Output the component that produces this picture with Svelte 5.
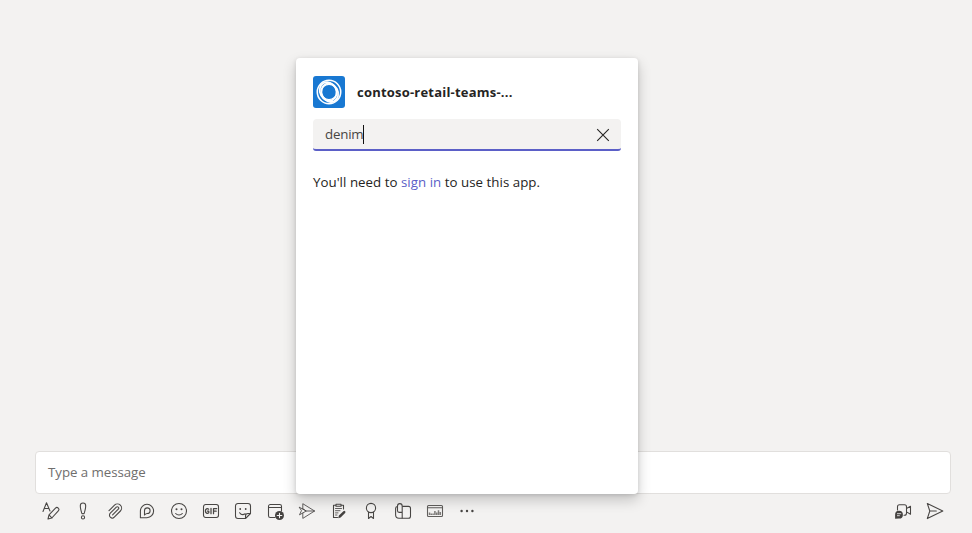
<script>
  let query = $state('denim');
</script>

<main>
  <div class="space"></div>
  <section class="compose">
    <div class="message"><span class="t-msg">Type a message</span></div>
    <div class="toolbar">
      <button aria-label="Format"><svg viewBox="0 0 20 20"><path d="M2 10.5 5.5 1.8 9 10M3.3 7.5h4.5M7 18l1-4.2 6.5-6.7a1.9 1.9 0 0 1 2.8 2.7L10.8 17zM8 13.8 11 17" /></svg></button>
      <button aria-label="Priority"><svg viewBox="0 0 20 20"><path d="M7.3 4.8c0-1.6 1.1-2.8 2.7-2.8s2.7 1.2 2.7 2.8c0 2.7-.8 5.2-1.4 7.2-.4 1.1-2.2 1.1-2.6 0-.6-2-1.4-4.5-1.4-7.2z" /><circle cx="10" cy="16.4" r="1.6" /></svg></button>
      <button aria-label="Attach"><svg viewBox="0 0 20 20"><path d="M4 9.7l5.5-5.5a4.1 4.1 0 0 1 5.9 5.8l-6.1 6.2a2.8 2.8 0 0 1-4-4l6-6a1.4 1.4 0 0 1 2 2l-5.7 5.7" /></svg></button>
      <button aria-label="Loop"><svg viewBox="0 0 20 20"><path d="M3.4 16.7V10A6.6 6.7 0 1 1 10 16.7zM7.5 14V9.7a2.8 2.8 0 1 1 2.8 2.8c-1.2 0-2 .6-2.8 1.5" /></svg></button>
      <button aria-label="Emoji"><svg viewBox="0 0 20 20"><circle cx="10" cy="10" r="7.5" /><path d="M6.7 12.5c1.7 2 4.9 2 6.6 0" /><g class="solid"><circle cx="7.5" cy="8.2" r="1" /><circle cx="12.5" cy="8.2" r="1" /></g></svg></button>
      <button aria-label="GIF"><svg viewBox="0 0 20 20"><rect x="2.5" y="3.5" width="15" height="13" rx="2.2" /><path class="bold" d="M7.6 8.2C6.4 7 4.4 7.9 4.4 10s2 3 3.4 1.8v-1.6H6.4M10 7.3v5.4M12.5 12.7V7.6h3.2M12.5 10.2h2.7" /></svg></button>
      <button aria-label="Sticker"><svg viewBox="0 0 20 20"><path d="M5 2.5h10A2.5 2.5 0 0 1 17.5 5v7.5l-5 5H5A2.5 2.5 0 0 1 2.5 15V5A2.5 2.5 0 0 1 5 2.5zM17.5 12.5H15a2.5 2.5 0 0 0-2.5 2.5v2.5M6.6 11.7c1.3 1.9 3.6 2.3 5.6 1.1" /><g class="solid"><circle cx="7.2" cy="8" r=".9" /><circle cx="12.7" cy="8" r=".9" /></g></svg></button>
      <button aria-label="Meet"><svg viewBox="0 0 20 20"><path d="M10 16.5H5.3a1.8 1.8 0 0 1-1.8-1.8V5.3a1.8 1.8 0 0 1 1.8-1.8h9.4a1.8 1.8 0 0 1 1.8 1.8V10M3.5 6.5h13" /><circle class="fill" cx="14.5" cy="14.5" r="4.5" /><path class="cut" d="M14.5 12.2v4.6M12.2 14.5h4.6" /></svg></button>
      <button aria-label="Stream"><svg viewBox="0 0 20 20"><path class="thin" d="M5.8 7.8V2.7L17.6 10 5.8 17.4v-5.2M2.5 6.3l6.8 3.7-6.8 3.8 1.8-3.8zM5.8 7.8 9.3 10h8.2" /></svg></button>
      <button aria-label="Tasks"><svg viewBox="0 0 20 20"><path d="M7 4.3H4.5v12.2h4M12 4.3h2.5V8M7 3.3h5v2H7z" /><path class="thin" d="M6.5 7.5h6M6.5 9.7h4.5M6.5 11.9h2.5M6.5 14h1.5" /><path class="fill" d="M9.2 17.2l.7-2.6 4.5-4.4a1.2 1.2 0 0 1 1.7 1.7l-4.5 4.5z" /></svg></button>
      <button aria-label="Praise"><svg viewBox="0 0 20 20"><circle cx="10" cy="7" r="4.6" /><path d="M7.5 11v6.5l2.5-2 2.5 2V11" /></svg></button>
      <button aria-label="Approvals"><svg viewBox="0 0 20 20"><path d="M9.7 5.4h5.8a2 2 0 0 1 2 2v7.8a2 2 0 0 1-2 2H6a3.4 3.4 0 0 1-3.4-3.4V7.5c0-1.1.7-1.8 1.7-2" /><path d="M4.5 9.8V5a2.3 2.3 0 0 1 4.7 0v6.4H6.1c-1.1 0-1.6-.7-1.6-1.6zM9.2 11.4v5.5" /></svg></button>
      <button aria-label="Polls"><svg viewBox="0 0 20 20"><rect class="soft" x="2.5" y="4.5" width="15" height="11" rx="1" /><path class="soft" d="M2.5 6.8h15" /><path class="bars" d="M4.5 14v-2.5M6.3 14v-1.5M8.1 14v-1.5M9.9 14v-4M11.7 14v-2.5M13.5 14V9.2M15.3 14v-3" /></svg></button>
      <button aria-label="More"><svg viewBox="0 0 20 20"><g class="solid"><circle cx="4.6" cy="10" r="1.2" /><circle cx="10" cy="10" r="1.2" /><circle cx="15.4" cy="10" r="1.2" /></g></svg></button>
      <span class="grow"></span>
      <button aria-label="Video clip"><svg viewBox="0 0 20 20"><path d="M4.5 9V5.7a2 2 0 0 1 2-2h5a2 2 0 0 1 2 2v6.6a2 2 0 0 1-2 2H11M13.5 7.5l4-2.3v8l-4-2.3" /><path class="fill" d="M2.1 17.8V13.7a3.9 3.9 0 1 1 3.9 3.9z" /><path class="cut thin" d="M4.4 12.7h3.4M4.4 14.7h2" /></svg></button>
      <button aria-label="Send"><svg viewBox="0 0 20 20"><path d="M2.3 2.5 17.8 10 2.3 17.6 4.8 10zM4.8 10h6.5" /></svg></button>
    </div>
  </section>

  <section class="popup">
    <header>
      <svg class="logo" viewBox="0 0 32 32"><rect width="32" height="32" rx="3" fill="#1878d2" /><g fill="none" stroke="#fff"><circle cx="16" cy="16" r="11.7" stroke-width="1.6" /><ellipse cx="15.2" cy="15.4" rx="8.1" ry="9.6" transform="rotate(-28 15.2 15.4)" stroke-width="1.8" /><ellipse cx="16.8" cy="16.7" rx="8.1" ry="9.6" transform="rotate(-28 16.8 16.7)" stroke-width="1.8" /><circle cx="16" cy="16" r="7.7" stroke-width="1.2" /></g></svg>
      <h1><span class="t-title">contoso-retail-teams-...</span></h1>
    </header>
    <div class="search">
      <span class="t-query">{query}</span><i class="caret"></i>
      <svg class="close" viewBox="0 0 14 14"><path d="M1.2 1.2l11.6 11.6M12.8 1.2 1.2 12.8" /></svg>
    </div>
    <p><span class="t-note">You'll need to <a href="#signin">sign in</a> to use this app.</span></p>
  </section>
</main>

<style>
  :global(body) { margin: 0; }
  main {
    position: relative;
    display: flex;
    flex-direction: column;
    height: 533px;
    overflow: hidden;
    background: #f3f2f1;
    color: #252423;
    font: 13.3px/20px "Segoe UI", "Open Sans", "Noto Sans", sans-serif;
  }
  .space { flex: 1; }
  .compose { padding: 0 21px 6px 35px; }
  .message {
    box-sizing: border-box;
    height: 43px;
    padding: 10px 12px;
    border: 1px solid #e1dfdd;
    border-radius: 4px;
    background: #fff;
    color: #6f6e6d;
    letter-spacing: -0.05px;
  }
  .toolbar { display: flex; height: 33px; align-items: center; }
  .grow { flex: 1; }
  button {
    display: flex;
    width: 32px;
    height: 32px;
    padding: 0;
    border: 0;
    background: none;
    align-items: center;
    justify-content: center;
  }
  button svg { width: 20px; height: 20px; fill: none; stroke: #484644; stroke-width: 1.08; stroke-linejoin: round; stroke-linecap: round; }
  svg .solid { fill: #484644; stroke: none; }
  svg .fill { fill: #444240; stroke: none; }
  svg .cut { stroke: #f3f2f1; }
  svg .bold { stroke-width: 1.25; }
  svg .thin { stroke-width: 0.85; }
  svg .soft { stroke: #605e5c; }
  svg .bars { stroke: #7d7b79; stroke-width: 1.5; stroke-linecap: butt; }
  .popup {
    position: absolute;
    left: 296px;
    top: 58px;
    box-sizing: border-box;
    width: 342px;
    height: 436px;
    padding: 18px 17px;
    border-radius: 4px;
    background: #fff;
    box-shadow: 0 6px 14px rgba(0, 0, 0, 0.2), 0 1px 4px rgba(0, 0, 0, 0.12);
  }
  header { display: flex; align-items: center; gap: 12px; height: 32px; }
  .logo { width: 32px; height: 32px; }
  h1 { margin: 0 0 1px; font-size: 13px; font-weight: 700; line-height: 20px; letter-spacing: 0.21px; white-space: nowrap; }
  .search {
    display: flex;
    align-items: center;
    box-sizing: border-box;
    height: 32px;
    margin-top: 11px;
    padding: 0 11px 0 12px;
    border-bottom: 2px solid #5b5fc7;
    border-radius: 4px 4px 3px 3px;
    background: #f3f2f1;
    color: #484644;
  }
  .t-query { letter-spacing: -0.2px; }
  .caret { width: 1px; height: 19px; background: #111; }
  .close { width: 14px; height: 14px; margin: 2px 0 0 auto; fill: none; stroke: #252423; stroke-width: 1.1; }
  p { margin: 21px 0 0; letter-spacing: 0.03px; white-space: nowrap; }
  a { color: #5b5fc7; text-decoration: none; }
</style>
